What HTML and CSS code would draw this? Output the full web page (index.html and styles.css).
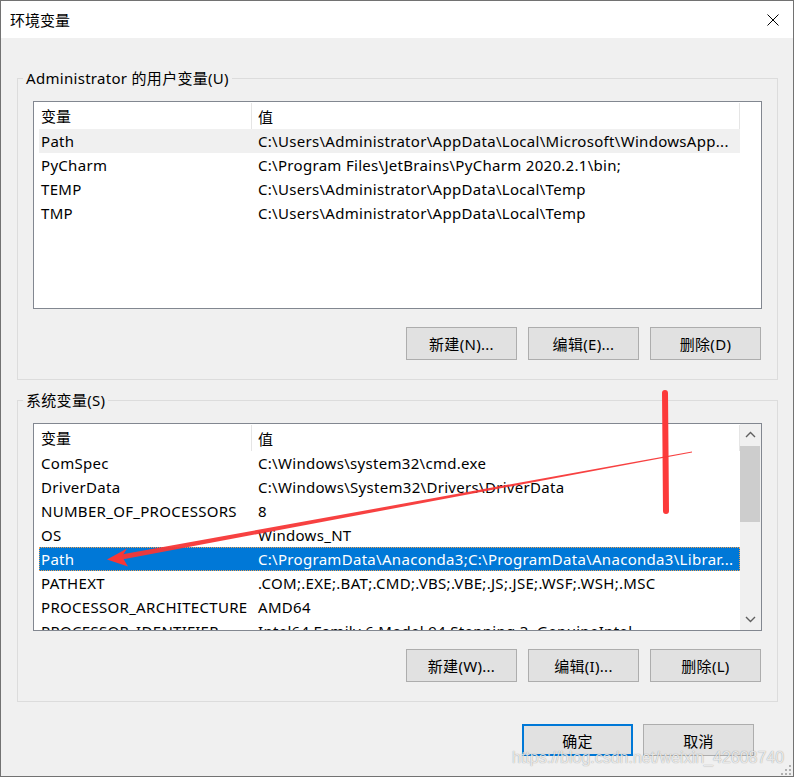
FILE: index.html
```html
<!DOCTYPE html>
<html lang="zh-CN">
<head>
<meta charset="utf-8">
<title>环境变量</title>
<link rel="stylesheet" href="styles.css">
</head>
<body>
<div class="window">
  <div class="titlebar">
    <span class="title">环境变量</span>
    <svg class="close" width="12" height="12" viewBox="0 0 12 12"><path d="M0.5 0.5L11.5 11.5M11.5 0.5L0.5 11.5" stroke="#000" stroke-width="1" fill="none"/></svg>
  </div>
  <div class="content">
    <section class="group">
      <div class="legend">Administrator 的用户变量(U)</div>
      <div class="list">
        <div class="rows">
          <div class="row head"><div class="c1">变量</div><div class="c2">值</div></div>
          <div class="row hover"><div class="c1">Path</div><div class="c2">C:\Users\Administrator\AppData\Local\Microsoft\WindowsApp...</div></div>
          <div class="row"><div class="c1">PyCharm</div><div class="c2">C:\Program Files\JetBrains\PyCharm 2020.2.1\bin;</div></div>
          <div class="row"><div class="c1">TEMP</div><div class="c2">C:\Users\Administrator\AppData\Local\Temp</div></div>
          <div class="row"><div class="c1">TMP</div><div class="c2">C:\Users\Administrator\AppData\Local\Temp</div></div>
        </div>
        <div class="sidespace"></div>
      </div>
      <div class="buttons">
        <button class="btn">新建(N)...</button>
        <button class="btn">编辑(E)...</button>
        <button class="btn">删除(D)</button>
      </div>
    </section>

    <section class="group group2">
      <div class="legend">系统变量(S)</div>
      <div class="list">
        <div class="rows">
          <div class="row head"><div class="c1">变量</div><div class="c2">值</div></div>
          <div class="row"><div class="c1">ComSpec</div><div class="c2">C:\Windows\system32\cmd.exe</div></div>
          <div class="row"><div class="c1">DriverData</div><div class="c2">C:\Windows\System32\Drivers\DriverData</div></div>
          <div class="row"><div class="c1">NUMBER_OF_PROCESSORS</div><div class="c2">8</div></div>
          <div class="row"><div class="c1">OS</div><div class="c2">Windows_NT</div></div>
          <div class="row selected"><div class="c1">Path</div><div class="c2">C:\ProgramData\Anaconda3;C:\ProgramData\Anaconda3\Librar...</div></div>
          <div class="row"><div class="c1">PATHEXT</div><div class="c2">.COM;.EXE;.BAT;.CMD;.VBS;.VBE;.JS;.JSE;.WSF;.WSH;.MSC</div></div>
          <div class="row"><div class="c1">PROCESSOR_ARCHITECTURE</div><div class="c2">AMD64</div></div>
          <div class="row"><div class="c1">PROCESSOR_IDENTIFIER</div><div class="c2">Intel64 Family 6 Model 94 Stepping 3, GenuineIntel</div></div>
        </div>
        <div class="scrollbar">
          <div class="sb-btn"><svg width="11" height="7" viewBox="0 0 11 7"><path d="M1 6L5.5 1.5L10 6" stroke="#606060" stroke-width="1.4" fill="none"/></svg></div>
          <div class="sb-track"><div class="sb-thumb"></div></div>
          <div class="sb-btn"><svg width="11" height="7" viewBox="0 0 11 7"><path d="M1 1L5.5 5.5L10 1" stroke="#606060" stroke-width="1.4" fill="none"/></svg></div>
        </div>
      </div>
      <div class="buttons">
        <button class="btn">新建(W)...</button>
        <button class="btn">编辑(I)...</button>
        <button class="btn">删除(L)</button>
      </div>
    </section>

    <div class="footer">
      <button class="btn btn-default">确定</button>
      <button class="btn">取消</button>
    </div>
  </div>

  <div class="watermark">https://blog.csdn.net/weixin_42608740</div>
  <svg class="grip" width="10" height="10" viewBox="0 0 10 10">
    <rect x="8" y="0" width="2" height="2" fill="#b0b0b0"/>
    <rect x="4" y="4" width="2" height="2" fill="#b0b0b0"/>
    <rect x="8" y="4" width="2" height="2" fill="#b0b0b0"/>
    <rect x="0" y="8" width="2" height="2" fill="#b0b0b0"/>
    <rect x="4" y="8" width="2" height="2" fill="#b0b0b0"/>
    <rect x="8" y="8" width="2" height="2" fill="#b0b0b0"/>
  </svg>

  <svg class="annot" width="794" height="777" viewBox="0 0 794 777">
    <path d="M665 393 L665.5 450 L666 511" stroke="#fc3a3a" stroke-width="6" stroke-linecap="round" fill="none"/>
    <polygon points="692,451.4 692,452.4 122,559.5 120,554.8" fill="#f73737" opacity="0.95"/>
    <polygon points="107,559.5 127,548.5 122,556.5 128,566.5" fill="#f73737"/>
  </svg>
</div>
</body>
</html>
```

FILE: styles.css
```css
* { box-sizing: border-box; }

html, body {
  margin: 0;
  padding: 0;
  background: #f0f0f0;
}

body {
  font-family: "Noto Sans", "Noto Sans CJK SC", sans-serif;
  font-size: 15px;
  letter-spacing: 0.3px;
  color: #000;
}

.window {
  position: relative;
  width: 794px;
  height: 777px;
  border: 1px solid #727272;
  background: #f0f0f0;
  overflow: hidden;
}

.titlebar {
  height: 37px;
  background: #fff;
  display: flex;
  align-items: center;
  justify-content: space-between;
  padding: 0 14px 0 9px;
}

.title {
  font-family: "Noto Sans CJK SC", sans-serif;
  font-size: 15px;
  line-height: 20px;
  letter-spacing: 0;
  margin-top: 1px;
}

.close { display: block; margin-top: 1px; }

.content {
  padding: 40px 15px 0 16px;
}

.group {
  border: 1px solid #dcdcdc;
  padding: 0 15px 19px 15px;
}

.group2 { margin-top: 20px; }

.legend {
  width: fit-content;
  height: 20px;
  line-height: 20px;
  margin: -11px 0 0 -10px;
  padding: 0 3px 0 3px;
  background: #f0f0f0;
  white-space: nowrap;
}

.list {
  margin-top: 13px;
  height: 208px;
  border: 1px solid #828790;
  background: #fff;
  display: flex;
  overflow: hidden;
}

.rows {
  width: 706px;
  padding-left: 5px;
  overflow: hidden;
}

.sidespace { flex: 1; }

.row {
  display: flex;
  height: 24px;
  line-height: 24px;
  white-space: nowrap;
}

.row .c1 {
  width: 213px;
  flex: none;
  padding-left: 2px;
  overflow: hidden;
}

.row .c2 {
  flex: 1;
  padding-left: 6px;
  overflow: hidden;
}

.row.head {
  height: 27px;
  padding-top: 3px;
}

.row.head .c1,
.row.head .c2 {
  font-family: "Noto Sans CJK SC", sans-serif;
  letter-spacing: 0;
  border-right: 1px solid #e5e5e5;
  margin-top: -2px;
  padding-top: 2px;
  height: 26px;
}

.row.head .c1 { padding-top: 1px; }

.row.hover { background: #f0f0f0; }

.row.selected {
  background: #0078d7;
  color: #fff;
  outline: 1px dotted #f0a050;
  outline-offset: -1px;
}

.scrollbar {
  width: 21px;
  background: #f0f0f0;
  display: flex;
  flex-direction: column;
}

.sb-btn {
  height: 21px;
  display: flex;
  align-items: center;
  justify-content: center;
}

.sb-track {
  flex: 1;
  padding-top: 1px;
}

.sb-thumb {
  height: 76px;
  margin-right: 1px;
  background: #cdcdcd;
}

.buttons {
  margin-top: 18px;
  display: flex;
  justify-content: flex-end;
  gap: 11px;
  padding-right: 1px;
}

.btn {
  width: 111px;
  height: 33px;
  border: 1px solid #adadad;
  background: #e1e1e1;
  font-family: "Noto Sans", "Noto Sans CJK SC", sans-serif;
  font-size: 15px;
  letter-spacing: 0.3px;
  color: #000;
  padding: 0;
  margin: 0;
}

.footer {
  margin-top: 22px;
  display: flex;
  justify-content: flex-end;
  gap: 10px;
  padding-right: 24px;
}

.footer .btn { height: 32px; }

.btn-default {
  border: 2px solid #0078d7;
}

.watermark {
  position: absolute;
  left: 511px;
  top: 747px;
  font-family: "Liberation Sans", sans-serif;
  font-size: 16px;
  line-height: 20px;
  letter-spacing: 0;
  color: rgba(255, 255, 255, 0.8);
  text-shadow: 0 0 1px rgba(0, 0, 0, 0.45);
  white-space: nowrap;
}

.grip {
  position: absolute;
  left: 780px;
  top: 764px;
}

.annot {
  position: absolute;
  left: -1px;
  top: -1px;
  pointer-events: none;
}
```
